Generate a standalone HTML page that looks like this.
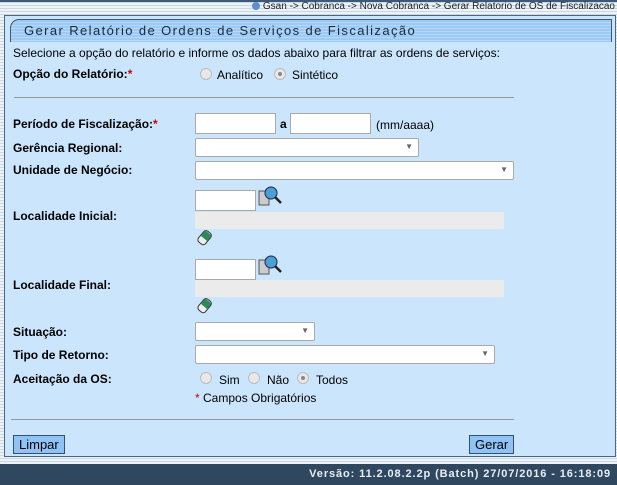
<!DOCTYPE html>
<html><head><meta charset="utf-8"><style>
*{margin:0;padding:0;box-sizing:border-box}
body{width:617px;height:485px;overflow:hidden;background:repeating-linear-gradient(#eef3f8 0 2px,#c9d8e6 2px 3px);font-family:"Liberation Sans",Arial,sans-serif;font-size:12px;color:#000;position:relative}
.a{position:absolute;white-space:nowrap}
.topbar{left:0;top:0;width:617px;height:2px;background:#3c5a78}
.panel{left:4px;top:15px;width:612px;height:442px;background:#cbe5fc;border:1px solid #4d6680}
.tab{left:10px;top:19px;width:602px;height:23px;border:1px solid #3d5a7a;border-bottom:none;border-radius:9px 0 0 0;background:repeating-linear-gradient(#9ccaf5 0 2px,#b6d9f8 2px 3px);font-size:13px;letter-spacing:1.4px;color:#1b2a3a;padding:3px 0 0 13px}
b,.l{font-weight:bold}
.in{background:#fff;border:1px solid #a9a9a9;height:21px}
.sel{background:#fff;border:1px solid #a9a9a9;border-radius:2px;height:19px}
.sel:after{content:"▼";position:absolute;right:5px;top:3px;font-size:8px;color:#666}
.dis{background:#ebebeb}
.rad{width:12px;height:12px;border-radius:50%;border:1px solid #bbb;background:#e8e8e8}
.rad.on:after{content:"";position:absolute;left:3px;top:3px;width:4px;height:4px;border-radius:50%;background:#888}
.hr{height:1px;background:#999;left:14px;width:500px}
.btn{background:#8fc2f5;border:1px solid #34506e;font-size:13px;height:19px;padding:1px 5px;color:#000}
.foot{left:0;top:464px;width:617px;height:21px;background:#2f4860;color:#e8eef4;font-weight:bold;font-size:11px;letter-spacing:0.9px;text-align:right;padding:4px 6px 0 0}
.r{color:#c00}
</style></head><body>
<div class="a topbar"></div>
<div class="a" style="right:2px;top:1px;font-size:10px;color:#222"><span style="display:inline-block;width:8px;height:8px;border-radius:50%;background:#5b8fd0;vertical-align:-1px"></span> Gsan -&gt; Cobranca -&gt; Nova Cobranca -&gt; Gerar Relatorio de OS de Fiscalizacao</div>
<div class="a panel"></div>
<div class="a tab">Gerar Relatório de Ordens de Serviços de Fiscalização</div>
<div class="a" style="left:13px;top:46px">Selecione a opção do relatório e informe os dados abaixo para filtrar as ordens de serviços:</div>
<div class="a l" style="left:13px;top:67px">Opção do Relatório:<span class="r">*</span></div>
<div class="a rad" style="left:200px;top:68px"></div><div class="a" style="left:217px;top:68px">Analítico</div>
<div class="a rad on" style="left:274px;top:68px"></div><div class="a" style="left:292px;top:68px">Sintético</div>
<div class="a hr" style="top:97px"></div>
<div class="a l" style="left:13px;top:117px">Período de Fiscalização:<span class="r">*</span></div>
<div class="a in" style="left:195px;top:113px;width:81px"></div>
<div class="a l" style="left:280px;top:117px">a</div>
<div class="a in" style="left:290px;top:113px;width:81px"></div>
<div class="a" style="left:376px;top:118px">(mm/aaaa)</div>
<div class="a l" style="left:13px;top:141px">Gerência Regional:</div>
<div class="a sel" style="left:195px;top:138px;width:224px"></div>
<div class="a l" style="left:13px;top:163px">Unidade de Negócio:</div>
<div class="a sel" style="left:195px;top:161px;width:319px"></div>
<div class="a in" style="left:195px;top:190px;width:61px"></div>
<svg class="a" style="left:258px;top:185px" width="26" height="22"><rect x="1" y="6" width="10" height="14" fill="#ccc" stroke="#555"/><circle cx="13" cy="8" r="6" fill="#4aa0d8" stroke="#224"/><line x1="17" y1="12" x2="23" y2="18" stroke="#222" stroke-width="2.5"/></svg>
<div class="a l" style="left:13px;top:209px">Localidade Inicial:</div>
<div class="a dis" style="left:195px;top:212px;width:309px;height:17px"></div>
<svg class="a" style="left:196px;top:229px" width="18" height="18"><g transform="rotate(40 9 9)"><rect x="4" y="2" width="9" height="14" rx="3" fill="#eee" stroke="#333"/><rect x="4.5" y="3" width="8" height="7" fill="#2c8a5a"/></g></svg>
<div class="a in" style="left:195px;top:259px;width:61px"></div>
<svg class="a" style="left:258px;top:254px" width="26" height="22"><rect x="1" y="6" width="10" height="14" fill="#ccc" stroke="#555"/><circle cx="13" cy="8" r="6" fill="#4aa0d8" stroke="#224"/><line x1="17" y1="12" x2="23" y2="18" stroke="#222" stroke-width="2.5"/></svg>
<div class="a l" style="left:13px;top:278px">Localidade Final:</div>
<div class="a dis" style="left:195px;top:280px;width:309px;height:17px"></div>
<svg class="a" style="left:196px;top:297px" width="18" height="18"><g transform="rotate(40 9 9)"><rect x="4" y="2" width="9" height="14" rx="3" fill="#eee" stroke="#333"/><rect x="4.5" y="3" width="8" height="7" fill="#2c8a5a"/></g></svg>
<div class="a l" style="left:13px;top:325px">Situação:</div>
<div class="a sel" style="left:195px;top:322px;width:120px"></div>
<div class="a l" style="left:13px;top:348px">Tipo de Retorno:</div>
<div class="a sel" style="left:195px;top:345px;width:300px"></div>
<div class="a l" style="left:13px;top:372px">Aceitação da OS:</div>
<div class="a rad" style="left:200px;top:372px"></div><div class="a" style="left:219px;top:373px">Sim</div>
<div class="a rad" style="left:248px;top:372px"></div><div class="a" style="left:267px;top:373px">Não</div>
<div class="a rad on" style="left:297px;top:372px"></div><div class="a" style="left:316px;top:373px">Todos</div>
<div class="a" style="left:195px;top:391px"><span class="r">*</span> Campos Obrigatórios</div>
<div class="a hr" style="left:11px;top:419px;width:503px"></div>
<div class="a btn" style="left:13px;top:435px">Limpar</div>
<div class="a btn" style="left:469px;top:435px">Gerar</div>
<div class="a foot">Versão: 11.2.08.2.2p (Batch) 27/07/2016 - 16:18:09</div>
</body></html>
